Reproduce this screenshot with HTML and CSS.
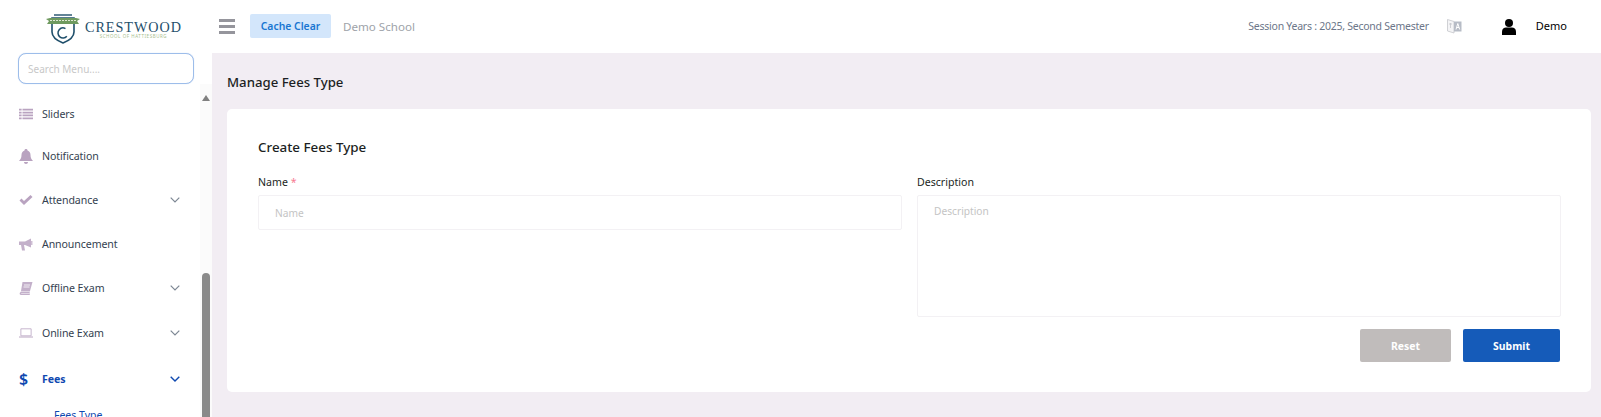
FILE: index.html
```html
<!DOCTYPE html>
<html lang="en">
<head>
<meta charset="utf-8">
<title>Manage Fees Type</title>
<link rel="stylesheet" href="styles.css">
</head>
<body>
<div class="app">
  <aside class="sidebar">
    <div class="brand">
      <svg class="crest" width="36" height="32" viewBox="0 0 36 32">
        <path d="M7 5V19C7 25 13 28 18 30C23 28 29 25 29 19V5Z" fill="#fff" stroke="#1f4f6b" stroke-width="1.6"/>
        <path d="M9 2H27" stroke="#1f4f6b" stroke-width="1.4" fill="none"/>
        <path d="M1 6L5 5H31L35 6L32 8L34 11H2L4 8Z" fill="#6f9a5f"/>
        <path d="M5 7.500H31" stroke="#dfe8d4" stroke-width="1.2" stroke-dasharray="2 1"/>
        <circle cx="18" cy="20" r="5" fill="none" stroke="#1f4f6b" stroke-width="1.5" stroke-dasharray="22 10" transform="rotate(40 18 20)"/>
      </svg>
      <div class="brand-text">
        <span class="brand-name">CRESTWOOD</span>
        <span class="brand-sub">SCHOOL OF HATTIESBURG</span>
      </div>
    </div>
    <div class="search-wrap">
      <input class="search" type="text" placeholder="Search Menu....">
    </div>
    <div class="menu-area">
      <nav class="menu">
        <a class="item item-first">
          <svg class="ico" width="14" height="12" viewBox="0 0 16 12"><path d="M0 0h3v2H0zM4 0h12v2H4zM0 3.300h3v2H0zM4 3.300h12v2H4zM0 6.600h3v2H0zM4 6.600h12v2H4zM0 10h3v2H0zM4 10h12v2H4z" fill="#b9a3c0"/></svg>
          <span class="label">Sliders</span>
        </a>
        <a class="item">
          <svg class="ico" width="14" height="15" viewBox="0 0 14 15"><path d="M7 0C8 0 8.500 .6 8.500 1.400C10.500 2 11.500 3.800 11.500 6C11.500 9 12.500 10.500 14 12H0C1.500 10.500 2.500 9 2.500 6C2.500 3.800 3.500 2 5.500 1.400C5.500 .6 6 0 7 0ZM5 13H9C9 14.200 8.200 15 7 15C5.800 15 5 14.200 5 13Z" fill="#b9a3c0"/></svg>
          <span class="label">Notification</span>
        </a>
        <a class="item">
          <svg class="ico" width="13" height="10" viewBox="0 0 13 10"><path d="M0 5.500L2 3.500L4.500 6L11 0L13 2L4.500 10Z" fill="#b9a3c0"/></svg>
          <span class="label">Attendance</span>
          <svg class="chev" width="10" height="6" viewBox="0 0 10 6"><path d="M.7.7L5 5L9.300.7" fill="none" stroke="#7d8794" stroke-width="1.200"/></svg>
        </a>
        <a class="item">
          <svg class="ico" width="14" height="13" viewBox="0 0 14 13"><path d="M0 3.500H6L12 .5V9.500L6 7H5L6 12.500H3L2 7H0Z" fill="#c3b0ca"/><path d="M12.800 3V7" stroke="#c3b0ca" stroke-width="1.200"/></svg>
          <span class="label">Announcement</span>
        </a>
        <a class="item">
          <svg class="ico" width="13" height="13" viewBox="0 0 13 13"><path d="M3 0H13L10.500 9H1.500ZM1.500 9.500H10.500L10 11H2C1.500 11 1.500 11.500 2 11.500H10.500L10.200 13H1.500C.5 13 0 12 .2 11Z" fill="#c3b0ca"/><path d="M4.500 3H10.500M4 5H10" stroke="#fff" stroke-width=".8"/></svg>
          <span class="label">Offline Exam</span>
          <svg class="chev" width="10" height="6" viewBox="0 0 10 6"><path d="M.7.7L5 5L9.300.7" fill="none" stroke="#7d8794" stroke-width="1.200"/></svg>
        </a>
        <a class="item item-tall">
          <svg class="ico" width="15" height="10" viewBox="0 0 15 10"><path d="M2 .5H13V8H2Z" fill="none" stroke="#c3b0ca"/><path d="M0 9.300H15" stroke="#c3b0ca" stroke-width="1.200"/></svg>
          <span class="label">Online Exam</span>
          <svg class="chev" width="10" height="6" viewBox="0 0 10 6"><path d="M.7.7L5 5L9.300.7" fill="none" stroke="#7d8794" stroke-width="1.200"/></svg>
        </a>
        <a class="item item-active">
          <span class="ico ico-dollar">$</span>
          <span class="label">Fees</span>
          <svg class="chev" width="10" height="6" viewBox="0 0 10 6"><path d="M.7.7L5 5L9.300.7" fill="none" stroke="#0f49b0" stroke-width="1.400"/></svg>
        </a>
        <a class="subitem">Fees Type</a>
      </nav>
      <div class="scrollbar">
        <span class="scroll-arrow"></span>
        <span class="scroll-thumb"></span>
      </div>
    </div>
  </aside>
  <div class="main">
    <header class="topbar">
      <div class="top-left">
        <span class="burger"><i></i><i></i><i></i></span>
        <button class="cache" type="button">Cache Clear</button>
        <span class="school">Demo School</span>
      </div>
      <div class="top-right">
        <span class="session">Session Years : 2025, Second Semester</span>
        <svg class="lang" width="15" height="16" viewBox="0 0 15 16"><path d="M.5 1.500L7 3.500V15L.5 13Z" fill="#f4f4f6" stroke="#c5c7cc" stroke-width=".8"/><path d="M7 3.500H14.500V13.500H7Z" fill="#b7bcc6"/><path d="M9 11.500L10.800 5.500L12.700 11.500M9.700 9.500H12" fill="none" stroke="#fff"/><path d="M2 6H5M3.500 5V10" stroke="#c5c7cc" stroke-width=".8"/></svg>
        <svg class="user" width="14" height="16" viewBox="0 0 14 16"><circle cx="7" cy="4" r="4" fill="#000"/><path d="M0 16V12.500C0 10 2 8.500 4 8.500H10C12 8.500 14 10 14 12.500V16Z" fill="#000"/></svg>
        <span class="username">Demo</span>
      </div>
    </header>
    <main class="content">
      <h1 class="page-title">Manage Fees Type</h1>
      <section class="card">
        <h2 class="card-title">Create Fees Type</h2>
        <form class="form">
          <div class="fields">
            <div class="field">
              <label class="field-label">Name <span class="req">*</span></label>
              <input class="control" type="text" placeholder="Name">
            </div>
            <div class="field">
              <label class="field-label">Description</label>
              <textarea class="control control-area" placeholder="Description"></textarea>
            </div>
          </div>
          <div class="actions">
            <button class="btn btn-reset" type="button">Reset</button>
            <button class="btn btn-submit" type="button">Submit</button>
          </div>
        </form>
      </section>
    </main>
  </div>
</div>
</body>
</html>
```
FILE: styles.css
```css
* { box-sizing: border-box; }
html, body { margin: 0; height: 100%; overflow: hidden; }
body { font-family: "Noto Sans", "Open Sans", sans-serif; background: #f2edf3; color: #1f2933; }
.app { display: flex; height: 417px; overflow: hidden; }

.sidebar { width: 212px; flex: none; background: #fff; display: flex; flex-direction: column; }
.brand { height: 53px; flex: none; display: flex; align-items: flex-start; padding: 12px 0 0 45px; gap: 4px; }
.crest { flex: none; margin-top: 1px; }
.brand-text { display: flex; flex-direction: column; align-items: center; margin-top: 9px; }
.brand-name { font-family: "Liberation Serif", serif; font-size: 14.200px; line-height: 12px; color: #1f4f6b; letter-spacing: .95px; white-space: nowrap; }
.brand-sub { font-size: 4.500px; line-height: 7px; color: #a9c08f; letter-spacing: .55px; white-space: nowrap; }

.search-wrap { flex: none; padding: 0 18px; height: 31px; }
.search { width: 176px; height: 31px; border: 1px solid #9dbdea; border-radius: 8px; background: #fff; padding: 0 9px; font: 10px "Noto Sans", sans-serif; outline: none; box-shadow: 0 0 1px #b9cff0; }
.search::placeholder { color: #c8c8c8; }

.menu-area { position: relative; flex: 1; overflow: hidden; }
.menu { display: flex; flex-direction: column; width: 200px; padding-left: 19px; }
.item { display: flex; align-items: center; height: 44px; font-size: 10.600px; letter-spacing: -.1px; color: #343f50; }
.item-first { margin-top: 10px; height: 40px; }
.item-tall { height: 45px; }
.ico { width: 14px; flex: none; margin-right: 9px; }
.ico-dollar { font-size: 16px; font-weight: 600; color: #0f49b0; line-height: 1; }
.label { flex: 1; }
.chev { flex: none; margin-right: 20px; }
.item-active { color: #0f49b0; font-weight: 700; margin-top: 2px; }
.subitem { padding-left: 35px; margin-top: 7px; font-size: 10.500px; color: #0f49b0; white-space: nowrap; }

.scrollbar { position: absolute; top: 0; bottom: 0; left: 200px; width: 12px; background: #fbfbfb; display: flex; flex-direction: column; align-items: center; }
.scroll-arrow { margin-top: 11px; width: 0; height: 0; border-left: 4px solid transparent; border-right: 4px solid transparent; border-bottom: 6px solid #808080; }
.scroll-thumb { margin-top: 172px; width: 8px; flex: 1; background: #8a8a8a; border-radius: 4px 4px 0 0; }

.main { flex: 1; min-width: 0; display: flex; flex-direction: column; }
.topbar { height: 53px; flex: none; background: #fff; display: flex; justify-content: space-between; align-items: center; padding: 0 34px 1px 7px; }
.top-left { display: flex; align-items: center; }
.burger { width: 16px; display: flex; flex-direction: column; gap: 3px; margin-right: 15px; }
.burger i { display: block; height: 3px; background: #95959c; }
.cache { width: 81px; height: 24px; border: 0; border-radius: 2px; background: #d3e6fb; color: #1976d2; font: 600 10.400px "Noto Sans", sans-serif; padding: 0; margin-right: 12px; }
.school { font-size: 11.600px; color: #9ea3a9; }
.top-right { display: flex; align-items: center; }
.session { font-size: 10.500px; letter-spacing: -.25px; color: #6c7689; margin-right: 18px; }
.lang { margin-right: 40px; }
.user { margin-right: 20px; margin-top: 2px; }
.username { font-size: 11px; color: #000; margin-bottom: 2px; }

.content { flex: 1; padding: 0 10px 0 15px; }
.page-title { margin: 0; padding-top: 2px; height: 56px; display: flex; align-items: center; font-size: 13.200px; font-weight: 500; color: #1c1f23; }
.card { height: 283px; background: #fff; border-radius: 5px; padding: 27px 30px 0 31px; }
.card-title { margin: 0; height: 22px; display: flex; align-items: center; font-size: 13.400px; font-weight: 500; color: #1c1f23; }
.form { display: flex; flex-direction: column; }
.fields { display: flex; gap: 15px; margin-top: 15px; height: 144px; }
.field { flex: 1; display: flex; flex-direction: column; min-width: 0; }
.field-label { height: 22px; padding-top: 2px; font-size: 10.600px; line-height: 15px; color: #1b1f24; }
.req { color: #f77b93; }
.control { width: 100%; height: 35px; border: 1px solid #f3f1f4; border-radius: 2px; background: #fff; padding: 0 16px; font: 10.200px "Noto Sans", sans-serif; outline: none; resize: none; display: block; }
.control::placeholder { color: #c4c4c4; }
.control-area { height: 122px; padding-top: 8px; }
.actions { display: flex; justify-content: flex-end; gap: 12px; margin-top: 12px; padding-right: 1px; }
.btn { height: 33px; border: 0; border-radius: 2px; color: #fff; font: 700 10.400px "Noto Sans", sans-serif; padding: 0; }
.btn-reset { width: 91px; background: #c0bcbb; }
.btn-submit { width: 97px; background: #155bb9; }
```
